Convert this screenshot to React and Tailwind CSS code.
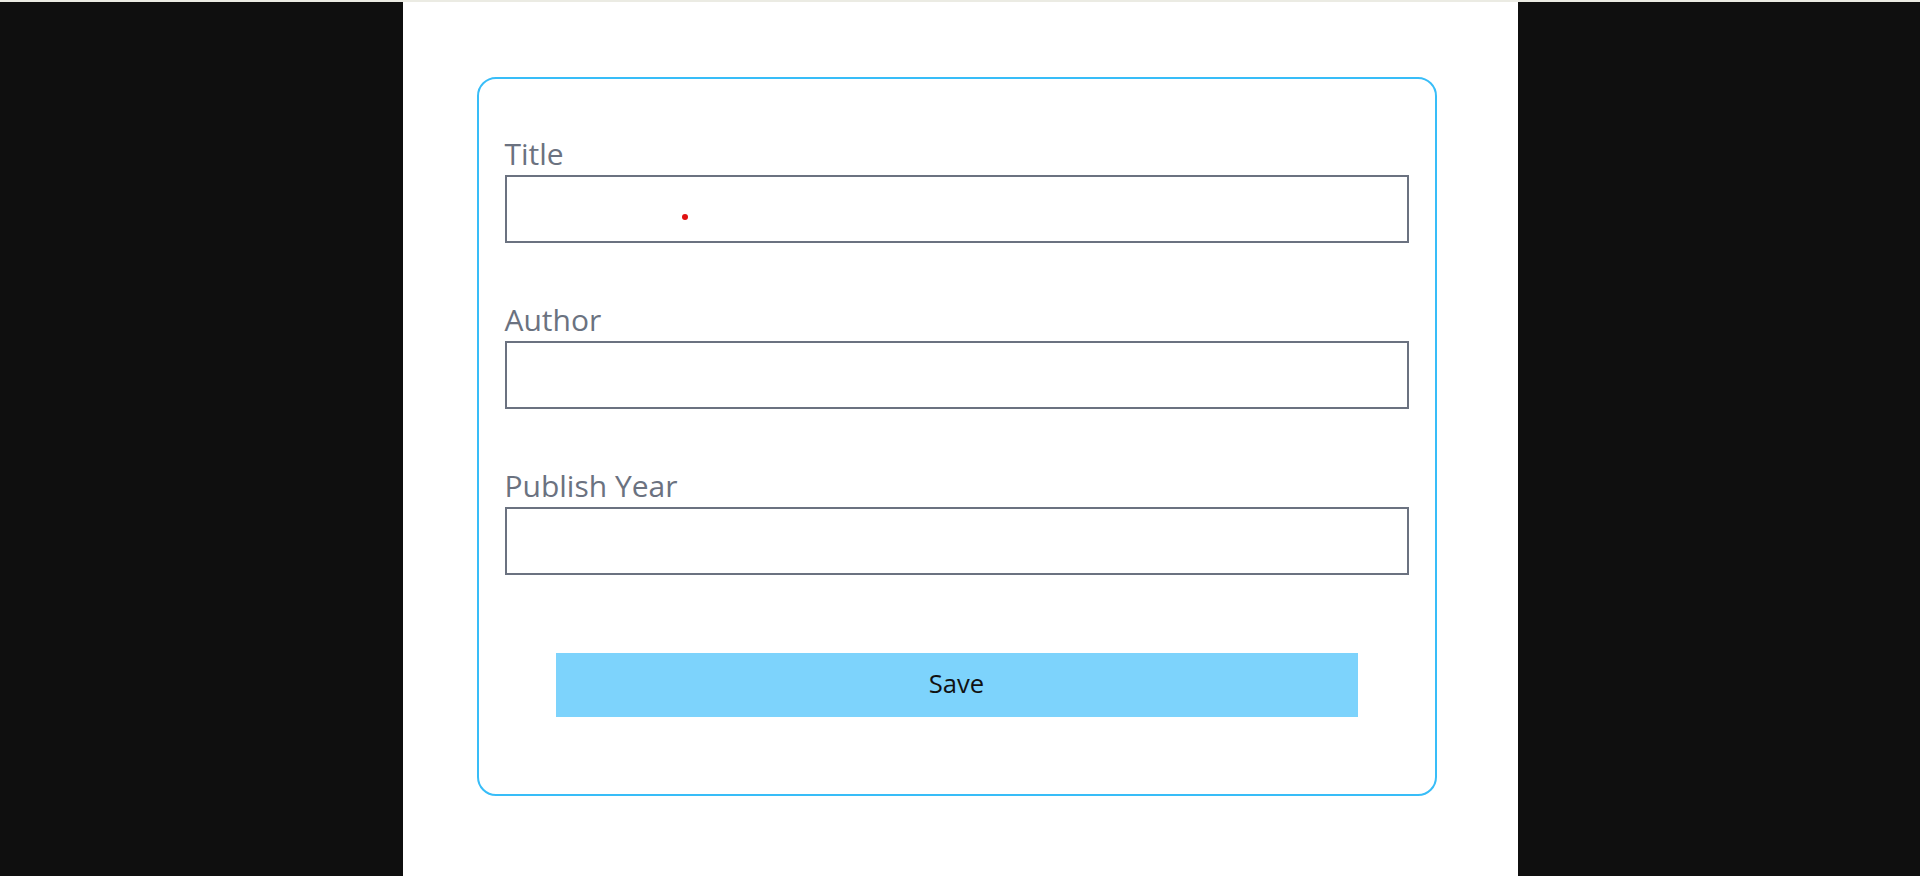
export default function App() {
  const fields = ["Title", "Author", "Publish Year"];

  return (
    <div className="min-h-screen h-[876px] bg-[#0f0f0f] flex flex-col overflow-hidden font-['Open_Sans',sans-serif]">
      {/* top hairline */}
      <div className="h-[2px] w-full bg-[#ebebe3] shrink-0" />

      <div className="flex-1 flex justify-center">
        <div className="w-[1115px] bg-white pt-[75px]">
          <div className="ml-[74px] w-[960px] border-2 border-[#38bdf8] rounded-[19px] px-[26px] pt-[23.5px] pb-[26px] flex flex-col">
            {fields.map((label, i) => (
              <div key={label} className="my-[26px] relative">
                <label className="block h-[46px] pt-[3px] leading-[43px] text-[30px] text-[#6b7280]">
                  {label}
                </label>
                <input
                  type="text"
                  className="block w-full h-[68px] border-2 border-[#6b7280] px-[26px] outline-none"
                />
                {i === 0 && (
                  <span className="absolute left-[177px] top-[85px] w-[6px] h-[6px] rounded-full bg-[#e01010]" />
                )}
              </div>
            ))}

            <button className="mx-[51px] mt-[52px] mb-[51px] h-[64px] bg-[#7dd3fc] text-[25.6px] text-[#111]">
              Save
            </button>
          </div>
        </div>
      </div>
    </div>
  );
}
